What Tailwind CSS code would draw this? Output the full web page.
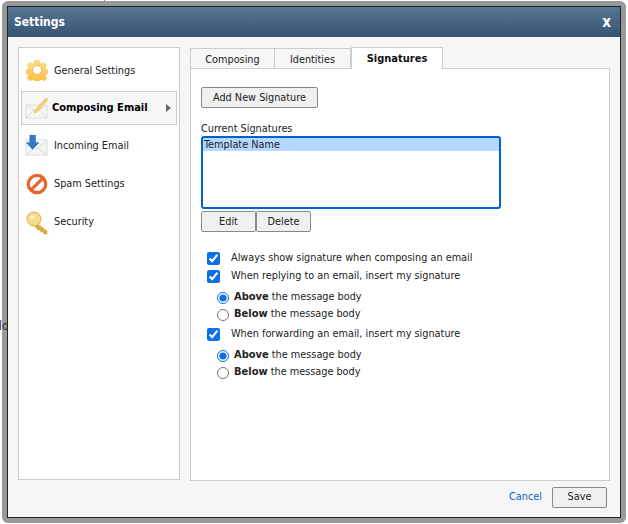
<!DOCTYPE html>
<html lang="en">
<head>
    <meta charset="UTF-8"/>
    <title>Settings</title>
    <script src="https://cdn.jsdelivr.net/npm/@tailwindcss/browser@4"></script>
</head>
<body class="relative w-[628px] h-[524px] overflow-hidden bg-white font-['DejaVu_Sans',sans-serif] font-stretch-condensed text-[10.8px] text-[#111]">

<!-- page behind the dialog -->
<div class="absolute left-[104px] top-0 w-px h-[6px] bg-[#888]"></div>

<div class="relative ml-[2px] mt-[1px] w-[624px] h-[522px] rounded-[6px] bg-[#999] p-[5px]">
    <div class="flex flex-col h-full border border-[#222] bg-[#f6f6f6]">

        <!-- title bar -->
        <div class="flex items-center justify-between h-[30px] pl-[6px] pr-[9px] bg-gradient-to-b from-[#567696] to-[#375470] text-white font-bold">
            <span class="text-[12px]">Settings</span>
            <span class="text-[15px]">x</span>
        </div>

        <div class="flex flex-1 gap-[10px] pl-[10px] pr-[9px] pt-[10px]">
            <!-- left menu -->
            <div class="w-[162px] h-[433px] border border-[#ccc] bg-white px-[2px] pt-[3px]">
                <div class="flex items-center h-[38px] pl-[5px]">
                    <svg class="w-[22px] h-[22px] mr-[6px]" viewBox="0 0 24 24">
                        <defs><linearGradient id="gear" x1="0" y1="0" x2="0" y2="1"><stop offset="0" stop-color="#fde08a"/><stop offset="1" stop-color="#f9bd3f"/></linearGradient></defs>
                        <path fill="url(#gear)" stroke="#f0b440" stroke-width="0.5" d="M9.700 1.500h4.600l.6 3 2.200.9 2.600-1.700 3 3-1.700 2.600.9 2.200 2.600.6v3.600l-2.600.6-.9 2.100 1.700 2.600-3 3-2.600-1.700-2.200.9-.6 2.500H9.700l-.6-2.500-2.200-.9-2.600 1.700-3-3 1.700-2.600-.9-2.100-2.100-.6v-3.600l2.100-.6.9-2.200-1.700-2.600 3-3 2.600 1.700 2.200-.9z"/>
                        <circle cx="12" cy="12" r="5" fill="#fff" stroke="#eeb043"/>
                    </svg>
                    <span class="pt-[3px] text-[#222]">General Settings</span>
                </div>
                <div class="flex items-center h-[34px] my-[2px] border border-[#ccc] bg-[#f6f6f6] pl-[3px] pr-[5px] text-[11px] font-bold">
                    <svg class="w-[24px] h-[24px] mr-[3px]" viewBox="0 0 24 24">
                        <path d="M1 9h21v13H1z" fill="#f6f6f2" stroke="#dededa"/>
                        <path d="M1 9l10.500 7L22 9M1 22l8-8M22 22l-8-8" fill="none" stroke="#dcdcd8"/>
                        <path d="M9 17l1-3L21 2l2 2L12 16z" fill="#f7cf6e" stroke="#e9b44c" stroke-width="0.5"/>
                    </svg>
                    <span class="flex-1 text-black">Composing Email</span>
                    <span class="w-0 h-0 border-y-[4px] border-y-transparent border-l-[5px] border-l-[#666]"></span>
                </div>
                <div class="flex items-center h-[38px] pl-[4px]">
                    <svg class="w-[23px] h-[23px] mr-[6px]" viewBox="0 0 24 24">
                        <path d="M1 5h22v16H1z" fill="#f3f4f5" stroke="#dcdee0"/>
                        <path d="M23 5l-10 9h-2M1 21l8-7M23 21l-9-7" fill="none" stroke="#d4d7da"/>
                        <path d="M5 0h6v8h3.500L8 15 1.500 8H5z" fill="#2f7ac8" stroke="#2468b4" stroke-width="0.5"/>
                    </svg>
                    <span class="text-[#222]">Incoming Email</span>
                </div>
                <div class="flex items-center h-[38px] pl-[5px]">
                    <svg class="w-[22px] h-[22px] mr-[6px]" viewBox="0 0 24 24">
                        <circle cx="12" cy="12" r="9.500" fill="#fff" stroke="#e8642c" stroke-width="3.500"/>
                        <path d="M5.500 18.500L18.500 5.500" stroke="#e8642c" stroke-width="3.500"/>
                    </svg>
                    <span class="text-[#222]">Spam Settings</span>
                </div>
                <div class="flex items-center h-[38px] pl-[5px]">
                    <svg class="w-[22px] h-[24px] mr-[6px] mt-[2px]" viewBox="0 0 22 24">
                        <path d="M9 11l12 9v3h-3l-1-2-2 0-1-2-2 0-5-6z" fill="#dcab40" stroke="#cc982f" stroke-width="0.5"/>
                        <circle cx="8" cy="8" r="7" fill="#f6dc8a" stroke="#dcae48"/>
                        <ellipse cx="6.500" cy="6" rx="2.500" ry="1.800" fill="#fff6d8"/>
                    </svg>
                    <span class="text-[#222]">Security</span>
                </div>
            </div>

            <!-- right panel -->
            <div class="flex flex-col w-[420px]">
                <div class="flex items-end h-[21px]">
                    <div class="flex items-center justify-center w-[85px] h-[20px] pt-[3px] border border-b-0 border-[#ccc] bg-[#f6f6f6] text-[#222]">Composing</div>
                    <div class="flex items-center justify-center w-[76px] h-[20px] pt-[3px] border border-b-0 border-l-0 border-[#ccc] bg-[#f6f6f6] text-[#222]">Identities</div>
                    <div class="relative z-10 flex items-center justify-center w-[92px] h-[22px] -mb-px border border-b-0 border-[#ccc] bg-white text-[11px] font-bold text-[#111] pt-[2px]">Signatures</div>
                </div>
                <div class="h-[413px] border border-[#ccc] bg-white pl-[10px] pt-[18px]">
                    <button class="block w-[117px] h-[21px] pt-[2px] border border-[#888] rounded-[2px] bg-[#f0f0f0] text-[#222]">Add New Signature</button>
                    <div class="mt-[14px] h-[14px] leading-[14px] text-[#222]">Current Signatures</div>
                    <div class="w-[300px] h-[73px] border-2 border-[#0060d0] rounded-[3px] bg-white">
                        <div class="h-[13px] leading-[14px] pl-[1px] bg-[#b3d7ff] text-[#222]">Template Name</div>
                    </div>
                    <div class="flex mt-[2px]">
                        <button class="w-[55px] h-[21px] pt-[2px] border border-[#888] rounded-[2px] bg-[#f0f0f0] text-[#222]">Edit</button>
                        <button class="w-[55px] h-[21px] pt-[2px] border border-[#888] rounded-[2px] bg-[#f0f0f0] text-[#222]">Delete</button>
                    </div>

                    <div class="mt-[17px] text-[#222]">
                        <label class="flex items-center h-[18px] pl-[6px] gap-[11px]"><input type="checkbox" checked class="m-0 w-[13px] h-[13px] accent-[#0b6fe8]"/>Always show signature when composing an email</label>
                        <label class="flex items-center h-[18px] pl-[6px] gap-[11px]"><input type="checkbox" checked class="m-0 w-[13px] h-[13px] accent-[#0b6fe8]"/>When replying to an email, insert my signature</label>
                        <label class="flex items-center h-[17px] mt-[4px] pl-[16px] gap-[5px]"><input type="radio" name="reply" checked class="m-0 w-[12px] h-[12px] accent-[#0b6fe8]"/><span><b class="text-[11px]">Above</b> the message body</span></label>
                        <label class="flex items-center h-[17px] pl-[16px] gap-[5px]"><input type="radio" name="reply" class="m-0 w-[12px] h-[12px]"/><span><b class="text-[11px]">Below</b> the message body</span></label>
                        <label class="flex items-center h-[18px] mt-[2px] pl-[6px] gap-[11px]"><input type="checkbox" checked class="m-0 w-[13px] h-[13px] accent-[#0b6fe8]"/>When forwarding an email, insert my signature</label>
                        <label class="flex items-center h-[17px] mt-[4px] pl-[16px] gap-[5px]"><input type="radio" name="fwd" checked class="m-0 w-[12px] h-[12px] accent-[#0b6fe8]"/><span><b class="text-[11px]">Above</b> the message body</span></label>
                        <label class="flex items-center h-[17px] pl-[16px] gap-[5px]"><input type="radio" name="fwd" class="m-0 w-[12px] h-[12px]"/><span><b class="text-[11px]">Below</b> the message body</span></label>
                    </div>
                </div>
            </div>
        </div>

        <!-- footer -->
        <div class="flex items-center justify-end h-[36px] pb-[4px] pr-[13px] gap-[10px]">
            <a class="pt-[1px] text-[#0b62c4]">Cancel</a>
            <button class="w-[55px] h-[21px] pt-[1px] border border-[#888] rounded-[2px] bg-[#f0f0f0] text-[#222]">Save</button>
        </div>
    </div>
</div>
<!-- text of the page behind, showing through the frame -->
<div class="absolute left-[-1px] top-[319px] w-[8px] overflow-hidden text-[12px] leading-[14px] text-[#333]">lo</div>
</body>
</html>
